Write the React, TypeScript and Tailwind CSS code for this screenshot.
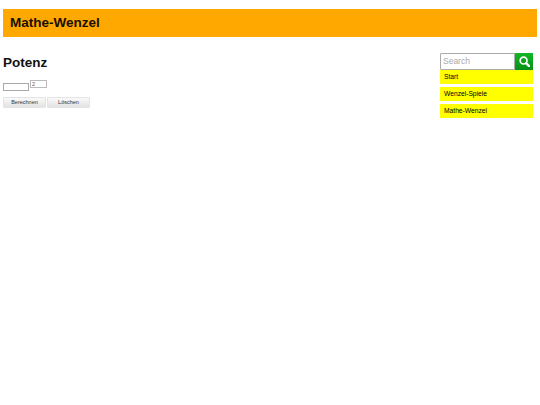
const links = ["Start", "Wenzel-Spiele", "Mathe-Wenzel"];

export default function App() {
  return (
    <div className="min-h-[405px] bg-white px-[3px] pt-[9px] font-['Liberation_Sans',sans-serif] text-black">
      {/* header */}
      <div className="h-[28px] bg-[#ffa800] pl-[7px] text-[13.5px] font-bold leading-[28px] text-[#1a1000]">Mathe-Wenzel</div>

      <div className="flex justify-between pt-[16px]">
        {/* main */}
        <div>
          <h1 className="text-[13.5px] font-bold leading-[20px] text-[#111]">Potenz</h1>
          <div className="mt-[7px] flex items-start gap-[1px]">
            <input className="mt-[3px] box-border h-[8px] w-[26px] border border-[#aaa] bg-white outline-none" />
            <input defaultValue="2" className="box-border h-[8px] w-[17px] border border-[#bbb] bg-white px-[1px] text-[5.5px] leading-[6px] text-[#555] outline-none" />
          </div>
          <div className="mt-[6px] flex gap-[1px]">
            <button className="h-[11px] w-[43px] rounded-[1px] border border-[#e4e4e4] bg-gradient-to-b from-[#fafafa] to-[#e2e2e2] text-[5.5px] leading-[9px] text-[#333]">Berechnen</button>
            <button className="h-[11px] w-[43px] rounded-[1px] border border-[#e4e4e4] bg-gradient-to-b from-[#fafafa] to-[#e2e2e2] text-[5.5px] leading-[9px] text-[#333]">Löschen</button>
          </div>
        </div>

        {/* sidebar */}
        <div className="mr-[4px] w-[93px]">
          <div className="flex h-[17px]">
            <input placeholder="Search" className="min-w-0 flex-1 rounded-l-[1px] border border-[#aaa] bg-white px-[2px] text-[8.5px] outline-none placeholder:text-[#aaa]" />
            <div className="flex w-[18px] items-center justify-center bg-gradient-to-b from-[#12b824] to-[#0a8f18]">
              <svg width="11" height="11" viewBox="0 0 24 24" fill="none" stroke="white">
                <circle cx="10" cy="10" r="7.5" strokeWidth="3.5" />
                <path d="M15.5 15.5L22 22" strokeWidth="5" strokeLinecap="round" />
              </svg>
            </div>
          </div>
          <div className="flex flex-col gap-[3px]">
            {links.map((l) => (
              <div key={l} className="h-[14px] bg-[#ffff00] pl-[4px] text-[6.7px] leading-[14px] text-black">{l}</div>
            ))}
          </div>
        </div>
      </div>
    </div>
  );
}
